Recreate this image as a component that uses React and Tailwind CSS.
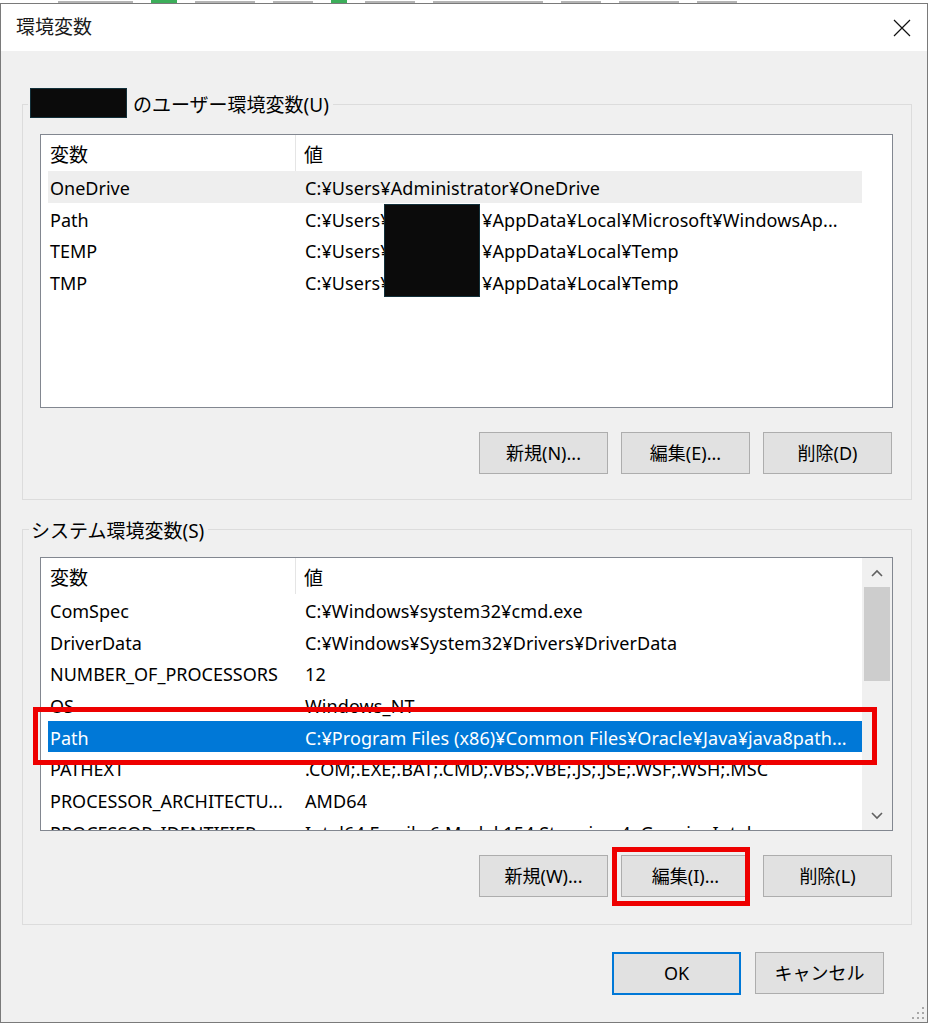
import React from "react";

const userRows = [
  { name: "OneDrive", value: "C:¥Users¥Administrator¥OneDrive", hot: true },
  { name: "Path", value: "¥AppData¥Local¥Microsoft¥WindowsAp...", redact: true },
  { name: "TEMP", value: "¥AppData¥Local¥Temp", redact: true },
  { name: "TMP", value: "¥AppData¥Local¥Temp", redact: true },
];

const sysRows = [
  { name: "ComSpec", value: "C:¥Windows¥system32¥cmd.exe" },
  { name: "DriverData", value: "C:¥Windows¥System32¥Drivers¥DriverData" },
  { name: "NUMBER_OF_PROCESSORS", value: "12" },
  { name: "OS", value: "Windows_NT" },
  { name: "Path", value: "C:¥Program Files (x86)¥Common Files¥Oracle¥Java¥java8path...", sel: true },
  { name: "PATHEXT", value: ".COM;.EXE;.BAT;.CMD;.VBS;.VBE;.JS;.JSE;.WSF;.WSH;.MSC" },
  { name: "PROCESSOR_ARCHITECTU...", value: "AMD64" },
  { name: "PROCESSOR_IDENTIFIER", value: "Intel64 Family 6 Model 154 Stepping 4, GenuineIntel" },
];

function Btn({ children, def }) {
  return (
    <div
      className={
        def
          ? "flex h-[43px] w-[129px] items-center justify-center border-2 border-[#0078d7] bg-[#e1e1e1] text-[18px] text-black"
          : "flex h-[42px] w-[129px] items-center justify-center border border-[#adadad] bg-[#e1e1e1] text-[18px] text-black"
      }
    >
      {children}
    </div>
  );
}

function Row({ r }) {
  const cls = r.sel
    ? "flex h-[31.7px] shrink-0 items-center whitespace-nowrap bg-[#0078d7] pt-[3px] text-[18px] text-white"
    : r.hot
    ? "flex h-[31.7px] shrink-0 items-center whitespace-nowrap bg-[#eeeeee] pt-[3px] text-[18px] text-black"
    : "flex h-[31.7px] shrink-0 items-center whitespace-nowrap pt-[3px] text-[18px] text-black";
  return (
    <div className={cls}>
      <div className="w-[256px] shrink-0 overflow-hidden pl-[2px]">{r.name}</div>
      <div className="flex overflow-hidden pl-[1px] tracking-[0.1px]">
        {r.redact ? (
          <>
            <span className="inline-block w-[177px] shrink-0 overflow-hidden">C:¥Users¥</span>
            <span>{r.value}</span>
          </>
        ) : (
          r.value
        )}
      </div>
    </div>
  );
}

function Chevron({ up }) {
  return (
    <svg width="12" height="8" viewBox="0 0 12 8">
      <path
        d={up ? "M1 7 L6 2 L11 7" : "M1 1 L6 6 L11 1"}
        fill="none"
        stroke="#606060"
        strokeWidth="1.6"
      />
    </svg>
  );
}

function ListBox({ rows, scroll }) {
  return (
    <div className="flex h-[274px] w-[853px] border border-[#828790] bg-white">
      <div className="flex min-w-0 flex-1 flex-col overflow-hidden pl-[7px]">
        <div className="flex h-[36px] shrink-0 items-stretch text-[19px] text-black">
          <div className="flex w-[248px] items-center border-r border-[#e5e5e5] pl-[2px] pt-[4px]">変数</div>
          <div className="flex items-center pl-[8px] pt-[4px]">値</div>
        </div>
        {rows.map((r, i) => (
          <Row key={i} r={r} />
        ))}
      </div>
      {scroll ? (
        <div className="flex w-[30px] shrink-0 flex-col bg-[#f0f0f0]">
          <div className="flex h-[29px] items-center justify-center">
            <Chevron up />
          </div>
          <div className="mx-[2px] h-[94px] bg-[#cdcdcd]" />
          <div className="flex-1" />
          <div className="flex h-[29px] items-center justify-center">
            <Chevron />
          </div>
        </div>
      ) : (
        <div className="w-[30px] shrink-0" />
      )}
    </div>
  );
}

export default function App() {
  return (
    <div className="relative h-[1024px] w-[931px] overflow-hidden bg-white font-['Noto_Sans','Noto_Sans_CJK_JP',sans-serif] text-black">
      {/* background strip above window */}
      <div className="flex h-[3px] items-end gap-[18px] pl-[58px]">
        <div className="h-[2px] w-[75px] bg-[#b4b4b4]" />
        <div className="h-[3px] w-[26px] bg-[#3cae5a]" />
        <div className="h-[2px] w-[60px] bg-[#b4b4b4]" />
        <div className="h-[2px] w-[40px] bg-[#b4b4b4]" />
        <div className="h-[3px] w-[16px] bg-[#3cae5a]" />
        <div className="h-[2px] w-[50px] bg-[#b4b4b4]" />
        <div className="h-[2px] w-[110px] bg-[#b4b4b4]" />
        <div className="h-[2px] w-[40px] bg-[#b4b4b4]" />
        <div className="h-[2px] w-[60px] bg-[#b4b4b4]" />
        <div className="h-[2px] w-[40px] bg-[#b4b4b4]" />
      </div>

      {/* window */}
      <div className="relative flex h-[1020px] w-[928px] flex-col border border-[#7a7a7a]">
        {/* title bar */}
        <div className="flex h-[47px] shrink-0 items-center justify-between bg-white pl-[15px] pr-[16px]">
          <span className="text-[19px] text-[#1a1a1a]">環境変数</span>
          <svg width="18" height="18" viewBox="0 0 18 18">
            <path d="M1 1 L17 17 M17 1 L1 17" stroke="#111" strokeWidth="1.2" fill="none" />
          </svg>
        </div>

        {/* client */}
        <div className="flex flex-1 flex-col bg-[#f0f0f0] pl-[21px]">
          {/* user group */}
          <div className="relative mt-[53px] w-[890px] border border-[#dcdcdc] pb-[25px] pl-[17px] pt-[29px]">
            <div className="absolute left-[5px] top-[-17px] flex h-[30px] items-center gap-[6px] bg-[#f0f0f0] pl-[2px] pr-[4px] text-[19px]">
              <div className="h-[30px] w-[97px] shrink-0 border border-[#12303a] bg-[#0b0b0b]" />
              <span className="pt-[5px]">のユーザー環境変数(U)</span>
            </div>
            <ListBox rows={userRows} />
            <div className="mt-[24px] flex w-[852px] justify-end gap-[13px]">
              <Btn>新規(N)...</Btn>
              <Btn>編集(E)...</Btn>
              <Btn>削除(D)</Btn>
            </div>
          </div>

          {/* system group */}
          <div className="relative mt-[29px] w-[890px] border border-[#dcdcdc] pb-[27px] pl-[17px] pt-[27px]">
            <div className="absolute left-[6px] top-[-13px] flex h-[26px] items-center bg-[#f0f0f0] pl-[2px] pr-[4px] pt-[2px] text-[19px]">
              システム環境変数(S)
            </div>
            <ListBox rows={sysRows} scroll />
            <div className="mt-[24px] flex w-[852px] justify-end gap-[13px]">
              <Btn>新規(W)...</Btn>
              <Btn>編集(I)...</Btn>
              <Btn>削除(L)</Btn>
            </div>
          </div>

          {/* OK / Cancel */}
          <div className="mt-[27px] flex w-[890px] justify-end gap-[14px] pr-[28px]">
            <Btn def>OK</Btn>
            <Btn>キャンセル</Btn>
          </div>
        </div>

        {/* resize grip */}
        <div className="absolute bottom-[3px] right-[3px] flex flex-col items-end gap-[3px]">
          <div className="flex gap-[3px]">
            <div className="h-[2px] w-[2px] bg-[#a8a8a8]" />
          </div>
          <div className="flex gap-[3px]">
            <div className="h-[2px] w-[2px] bg-[#a8a8a8]" />
            <div className="h-[2px] w-[2px] bg-[#a8a8a8]" />
          </div>
          <div className="flex gap-[3px]">
            <div className="h-[2px] w-[2px] bg-[#a8a8a8]" />
            <div className="h-[2px] w-[2px] bg-[#a8a8a8]" />
            <div className="h-[2px] w-[2px] bg-[#a8a8a8]" />
          </div>
        </div>
      </div>

      {/* redaction over user values */}
      <div className="absolute left-[384px] top-[204px] h-[93px] w-[96px] border border-[#12303a] bg-[#0b0b0b]" />

      {/* red annotation boxes */}
      <div className="absolute left-[33px] top-[707px] h-[58px] w-[844px] border-[5px] border-[#ee0000]" />
      <div className="absolute left-[612px] top-[847px] h-[59px] w-[138px] border-[5px] border-[#ee0000]" />
    </div>
  );
}
